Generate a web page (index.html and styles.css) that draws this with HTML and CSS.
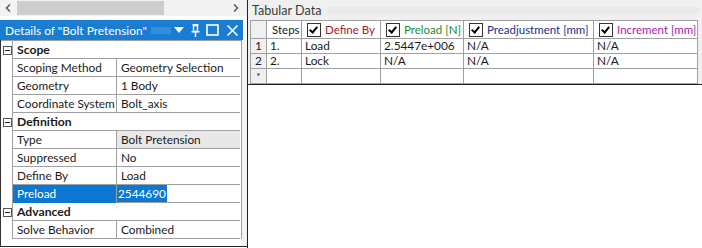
FILE: index.html
```html
<!DOCTYPE html>
<html>
<head>
<meta charset="utf-8">
<link rel="stylesheet" href="styles.css">
</head>
<body>
<div class="app">
  <div class="left">
    <div class="hscroll">
      <svg class="arrow" width="6" height="8" viewBox="0 0 6 8"><path d="M5 0.5 L1.5 4 L5 7.5" stroke="#606060" stroke-width="1.6" fill="none"/></svg>
      <div class="track"><div class="thumb"></div></div>
      <svg class="arrow" width="6" height="8" viewBox="0 0 6 8"><path d="M1 0.5 L4.5 4 L1 7.5" stroke="#606060" stroke-width="1.6" fill="none"/></svg>
    </div>
    <div class="details">
      <div class="titlebar">
        <span class="ttext">Details of "Bolt Pretension"</span>
        <span class="tgrip"></span>
        <svg class="ticon i-tri" width="10" height="6" viewBox="0 0 10 6"><path d="M0 0H10L5 6Z" fill="#fff"/></svg>
        <svg class="ticon i-pin" width="9" height="13" viewBox="0 0 9 13"><path d="M2.5 1.5H6.5V7.5H2.5Z" fill="none" stroke="#fff" stroke-width="1.4"/><path d="M0.5 7.7H8.5M4.5 8V13" stroke="#fff" stroke-width="1.4"/><path d="M1.5 0.8H7.5" stroke="#fff" stroke-width="1.4"/></svg>
        <svg class="ticon i-max" width="13" height="12" viewBox="0 0 13 12"><rect x="1" y="1" width="11" height="10" fill="none" stroke="#fff" stroke-width="1.6"/></svg>
        <svg class="ticon i-x" width="11" height="11" viewBox="0 0 11 11"><path d="M0.5 0.5L10.5 10.5M10.5 0.5L0.5 10.5" stroke="#fff" stroke-width="1.5"/></svg>
      </div>
      <div class="dbody">
        <div class="props">
          <div class="row group"><div class="gut"><span class="minus"></span></div><div class="gcell">Scope</div></div>
          <div class="row"><div class="gut"></div><div class="lab">Scoping Method</div><div class="val">Geometry Selection</div></div>
          <div class="row"><div class="gut"></div><div class="lab">Geometry</div><div class="val">1 Body</div></div>
          <div class="row"><div class="gut"></div><div class="lab">Coordinate System</div><div class="val">Bolt_axis</div></div>
          <div class="row group"><div class="gut"><span class="minus"></span></div><div class="gcell">Definition</div></div>
          <div class="row"><div class="gut"></div><div class="lab">Type</div><div class="val ro">Bolt Pretension</div></div>
          <div class="row"><div class="gut"></div><div class="lab">Suppressed</div><div class="val">No</div></div>
          <div class="row"><div class="gut"></div><div class="lab">Define By</div><div class="val">Load</div></div>
          <div class="row"><div class="gut"></div><div class="lab sel">Preload</div><div class="val"><span class="hl">2544690</span></div></div>
          <div class="row group"><div class="gut"><span class="minus"></span></div><div class="gcell">Advanced</div></div>
          <div class="row"><div class="gut"></div><div class="lab">Solve Behavior</div><div class="val">Combined</div></div>
        </div>
        <div class="vstrip"></div>
      </div>
    </div>
  </div>
  <div class="right">
    <div class="tabhead"><span class="thtext">Tabular Data</span><span class="hgrip"></span></div>
    <div class="tabwrap">
      <table class="tab">
        <colgroup>
          <col class="c0"><col class="c1"><col class="c2"><col class="c3"><col class="c4"><col class="c5">
        </colgroup>
        <tr class="hrow">
          <th class="rh"></th>
          <th>Steps</th>
          <th><span class="hc"><span class="cb"></span><span class="t-red">Define By</span></span></th>
          <th><span class="hc"><span class="cb"></span><span class="t-green">Preload [N]</span></span></th>
          <th><span class="hc"><span class="cb"></span><span class="t-blue">Preadjustment [mm]</span></span></th>
          <th><span class="hc"><span class="cb"></span><span class="t-purple">Increment [mm]</span></span></th>
        </tr>
        <tr><td class="rh">1</td><td>1.</td><td>Load</td><td>2.5447e+006</td><td>N/A</td><td>N/A</td></tr>
        <tr><td class="rh">2</td><td>2.</td><td>Lock</td><td>N/A</td><td>N/A</td><td>N/A</td></tr>
        <tr><td class="rh star">*</td><td></td><td></td><td></td><td></td><td></td></tr>
      </table>
      <div class="rstrip"></div>
    </div>
  </div>
</div>
</body>
</html>
```

FILE: styles.css
```css
html, body {
  margin: 0;
  padding: 0;
  background: #fff;
}
body {
  font-family: Lato, "Noto Sans", sans-serif;
  font-size: 11.8px;
  color: #1a1a1a;
}
.app {
  display: flex;
  width: 702px;
  height: 248px;
  overflow: hidden;
}
.left {
  width: 247px;
  height: 248px;
  display: flex;
  flex-direction: column;
  padding-bottom: 1px;
  box-sizing: border-box;
}
.hscroll {
  height: 16px;
  background: #f3f3f3;
  display: flex;
  align-items: center;
  padding: 0 8px 0 5px;
  margin-bottom: 4px;
  flex: none;
}
.track {
  flex: 1;
  height: 14px;
  margin: 0 6px;
}
.thumb {
  width: 147px;
  height: 14px;
  background: #cdcdcd;
}
.details {
  flex: 1;
  min-height: 0;
  display: flex;
  flex-direction: column;
  border-left: 1px solid #333;
  border-bottom: 1px solid #222;
}
.titlebar {
  height: 20px;
  flex: none;
  background: #197dd3;
  color: #fff;
  display: flex;
  align-items: center;
  padding-left: 5px;
  padding-right: 5px;
  margin-right: 4px;
  margin-left: -1px;
  overflow: hidden;
}
.ttext {
  font-size: 11.9px;
  white-space: nowrap;
  flex: none;
}
.tgrip {
  flex: 1;
  height: 7px;
  margin-left: 4px;
  background-image: radial-gradient(circle, rgba(255,255,255,0.4) 0.5px, transparent 0.8px);
  background-size: 2px 2px;
}
.ticon {
  flex: none;
}
.i-tri { margin-left: 3px; }
.i-pin { margin-left: 7px; }
.i-max { margin-left: 6px; }
.i-x { margin-left: 8px; }
.dbody {
  flex: 1;
  display: flex;
}
.props {
  width: 240px;
  display: flex;
  flex-direction: column;
  border-top: 1px solid #a0a0a0;
  border-right: 1px solid #a0a0a0;
  align-self: flex-start;
}
.vstrip {
  flex: 1;
  background: #f3f3f3;
}
.row {
  display: grid;
  grid-template-columns: 12px 104px 123px;
  height: 18px;
}
.row.group {
  grid-template-columns: 12px 227px;
}
.gut {
  border-right: 1px solid #a0a0a0;
  display: flex;
  align-items: center;
  padding-left: 2px;
}
.minus {
  width: 7px;
  height: 7px;
  border: 1px solid #555;
  position: relative;
  background: #fff;
}
.minus::after {
  content: "";
  position: absolute;
  left: 1px;
  right: 1px;
  top: 3px;
  height: 1px;
  background: #222;
}
.lab, .val, .gcell {
  border-bottom: 1px solid #a0a0a0;
  display: flex;
  align-items: center;
  padding-left: 4px;
  white-space: nowrap;
  overflow: hidden;
}
.lab {
  border-right: 1px solid #a0a0a0;
}
.gcell {
  font-weight: bold;
  font-size: 12.2px;
}
.val.ro {
  background: #e8e8e8;
}
.lab.sel {
  background: #0a78d4;
  color: #fff;
  border-bottom-color: #0a78d4;
}
.hl {
  background: #0a78d4;
  color: #fff;
  margin-left: -4px;
  padding: 1px;
}
.right {
  flex: 1;
  border-left: 1px solid #222;
  display: flex;
  flex-direction: column;
}
.tabhead {
  height: 20px;
  background: #f0f0f0;
  display: flex;
  align-items: center;
  padding-left: 4px;
  color: #3a3a3a;
}
.thtext {
  font-size: 12.6px;
  white-space: nowrap;
}
.hgrip {
  flex: 1;
  height: 7px;
  margin: 0 2px 0 6px;
  background-image: radial-gradient(circle, #c4c4c4 0.45px, transparent 0.75px);
  background-size: 2px 2px;
}
.tabwrap {
  display: flex;
  border-bottom: 1px solid #222;
  padding-left: 2px;
  background: #f0f0f0;
}
.tab {
  border-collapse: collapse;
  table-layout: fixed;
  width: 447px;
  background: #fff;
}
.c0 { width: 16px; }
.c1 { width: 35px; }
.c2 { width: 79px; }
.c3 { width: 83px; }
.c4 { width: 130px; }
.c5 { width: 104px; }
.tab th, .tab td {
  border: 1px solid #a0a0a0;
  padding: 0 0 0 3px;
  text-align: left;
  font-weight: normal;
  white-space: nowrap;
  overflow: hidden;
  height: 14px;
  line-height: 14px;
}
.tab tr.hrow th {
  height: 17px;
  padding-left: 5px;
  font-size: 11.5px;
}
.tab th.rh, .tab td.rh {
  background: #f0f0f0;
  text-align: center;
  padding: 0;
}
.tab td.star {
  font-size: 10px;
}
.hc {
  display: flex;
  align-items: center;
  gap: 4px;
}
.cb {
  width: 12px;
  height: 12px;
  border: 1px solid #333;
  background: #fff;
  position: relative;
  flex: none;
}
.cb::after {
  content: "";
  position: absolute;
  left: 3px;
  top: 1px;
  width: 3px;
  height: 6px;
  border-right: 2px solid #000;
  border-bottom: 2px solid #000;
  transform: rotate(40deg);
}
.t-red { color: #a3202f; }
.t-green { color: #198a2c; }
.t-blue { color: #1e2e8c; }
.t-purple { color: #a821a8; }
.rstrip {
  flex: 1;
  background: #f0f0f0;
}
```
